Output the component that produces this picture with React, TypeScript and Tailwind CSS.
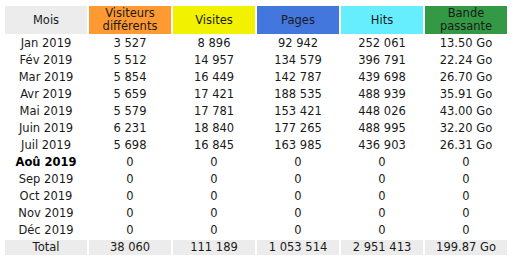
import React from "react";

const rows = [
  { m: "Jan 2019", u: "3 527", v: "8 896", p: "92 942", h: "252 061", k: "13.50 Go" },
  { m: "Fév 2019", u: "5 512", v: "14 957", p: "134 579", h: "396 791", k: "22.24 Go" },
  { m: "Mar 2019", u: "5 854", v: "16 449", p: "142 787", h: "439 698", k: "26.70 Go" },
  { m: "Avr 2019", u: "5 659", v: "17 421", p: "188 535", h: "488 939", k: "35.91 Go" },
  { m: "Mai 2019", u: "5 579", v: "17 781", p: "153 421", h: "448 026", k: "43.00 Go" },
  { m: "Juin 2019", u: "6 231", v: "18 840", p: "177 265", h: "488 995", k: "32.20 Go" },
  { m: "Juil 2019", u: "5 698", v: "16 845", p: "163 985", h: "436 903", k: "26.31 Go" },
  { m: "Aoû 2019", u: "0", v: "0", p: "0", h: "0", k: "0", current: true },
  { m: "Sep 2019", u: "0", v: "0", p: "0", h: "0", k: "0" },
  { m: "Oct 2019", u: "0", v: "0", p: "0", h: "0", k: "0" },
  { m: "Nov 2019", u: "0", v: "0", p: "0", h: "0", k: "0" },
  { m: "Déc 2019", u: "0", v: "0", p: "0", h: "0", k: "0" },
];

const total = ["Total", "38 060", "111 189", "1 053 514", "2 951 413", "199.87 Go"];

const App = () => {
  return (
    <div className="bg-white w-[516px] h-[263px] pt-[4px] pl-[3px] font-['Verdana','DejaVu_Sans',sans-serif] text-[11.5px] text-[#1a1a1a]">
      <table className="border-separate border-spacing-[2px] table-fixed w-[506px]">
        <thead>
          <tr className="h-[28px] leading-[13px]">
            <th className="w-[82px] p-0 font-normal bg-[#ececec]">Mois</th>
            <th className="w-[82px] p-0 font-normal bg-[#ff9933]">Visiteurs<br />différents</th>
            <th className="w-[82px] p-0 font-normal bg-[#f2f200]">Visites</th>
            <th className="w-[82px] p-0 font-normal bg-[#4477dd]">Pages</th>
            <th className="w-[82px] p-0 font-normal bg-[#66eeff]">Hits</th>
            <th className="w-[82px] p-0 font-normal bg-[#339944]">Bande<br />passante</th>
          </tr>
        </thead>
        <tbody>
          {rows.map((r) => (
            <tr key={r.m} className="h-[15px] leading-[15px] text-center">
              <td className={r.current ? "p-0 font-bold text-black" : "p-0"}>{r.m}</td>
              <td className="p-0">{r.u}</td>
              <td className="p-0">{r.v}</td>
              <td className="p-0">{r.p}</td>
              <td className="p-0">{r.h}</td>
              <td className="p-0">{r.k}</td>
            </tr>
          ))}
          <tr className="h-[15px] leading-[15px] text-center">
            {total.map((t) => (
              <td key={t} className="p-0 bg-[#ececec]">{t}</td>
            ))}
          </tr>
        </tbody>
      </table>
    </div>
  );
};

export default App;
